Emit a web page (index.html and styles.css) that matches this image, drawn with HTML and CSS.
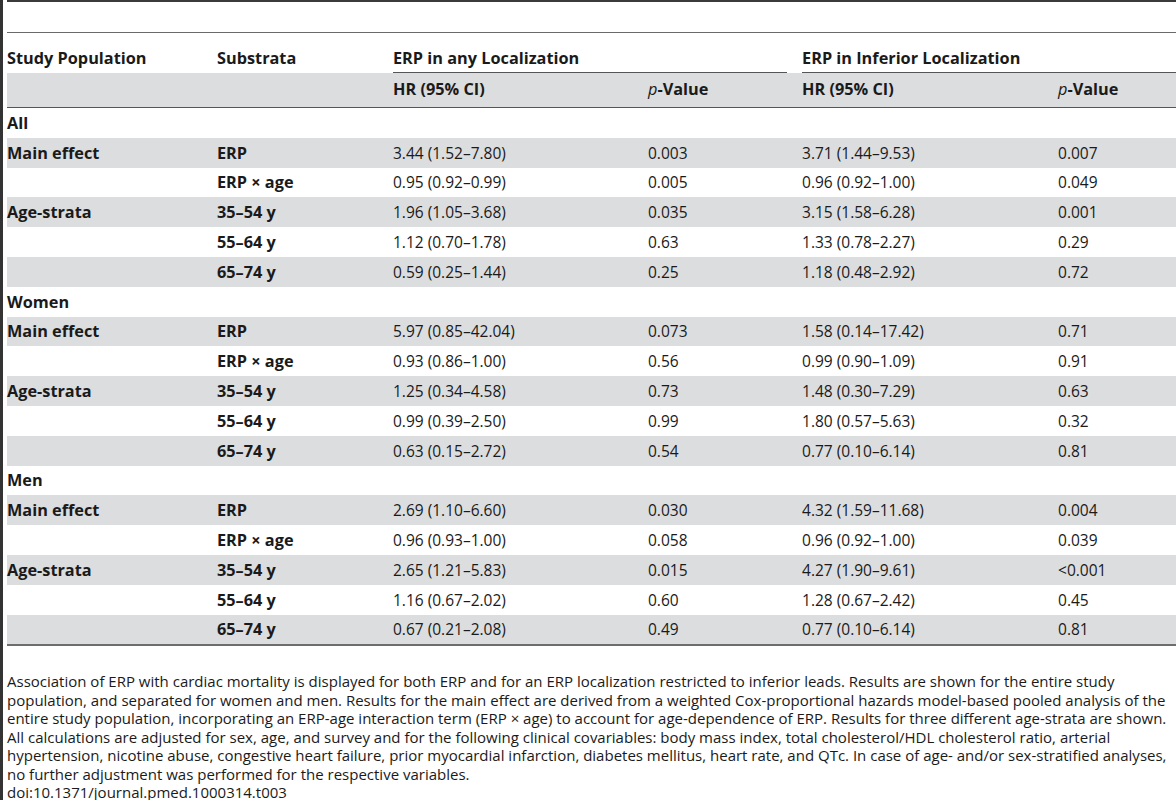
FILE: index.html
```html
<!DOCTYPE html>
<html lang="en">

<head>
    <meta charset="UTF-8">
    <meta name="viewport" content="width=device-width, initial-scale=1.0">
    <title>Table 3. ERP and cardiac mortality</title>
    <link rel="stylesheet" href="styles.css">
</head>

<body>
    <div class="page">
        <div class="figure">
            <div class="caption-space"></div>
            <table class="results">
                <colgroup>
                    <col class="c-pop">
                    <col class="c-sub">
                    <col class="c-hr">
                    <col class="c-p">
                    <col class="c-hr2">
                    <col class="c-p2">
                </colgroup>
                <thead>
                    <tr class="head-top">
                        <th>Study Population</th>
                        <th>Substrata</th>
                        <th colspan="2" class="group first">ERP in any Localization</th>
                        <th colspan="2" class="group">ERP in Inferior Localization</th>
                    </tr>
                    <tr class="head-sub">
                        <th></th>
                        <th></th>
                        <th>HR (95% CI)</th>
                        <th><em>p</em>-Value</th>
                        <th>HR (95% CI)</th>
                        <th><em>p</em>-Value</th>
                    </tr>
                </thead>
                <tbody>
                    <tr class="section"><td>All</td><td></td><td></td><td></td><td></td><td></td></tr>
                    <tr><td class="b">Main effect</td><td class="b">ERP</td><td>3.44 (1.52–7.80)</td><td>0.003</td><td>3.71 (1.44–9.53)</td><td>0.007</td></tr>
                    <tr><td></td><td class="b">ERP × age</td><td>0.95 (0.92–0.99)</td><td>0.005</td><td>0.96 (0.92–1.00)</td><td>0.049</td></tr>
                    <tr><td class="b">Age-strata</td><td class="b">35–54 y</td><td>1.96 (1.05–3.68)</td><td>0.035</td><td>3.15 (1.58–6.28)</td><td>0.001</td></tr>
                    <tr><td></td><td class="b">55–64 y</td><td>1.12 (0.70–1.78)</td><td>0.63</td><td>1.33 (0.78–2.27)</td><td>0.29</td></tr>
                    <tr><td></td><td class="b">65–74 y</td><td>0.59 (0.25–1.44)</td><td>0.25</td><td>1.18 (0.48–2.92)</td><td>0.72</td></tr>

                    <tr class="section"><td>Women</td><td></td><td></td><td></td><td></td><td></td></tr>
                    <tr><td class="b">Main effect</td><td class="b">ERP</td><td>5.97 (0.85–42.04)</td><td>0.073</td><td>1.58 (0.14–17.42)</td><td>0.71</td></tr>
                    <tr><td></td><td class="b">ERP × age</td><td>0.93 (0.86–1.00)</td><td>0.56</td><td>0.99 (0.90–1.09)</td><td>0.91</td></tr>
                    <tr><td class="b">Age-strata</td><td class="b">35–54 y</td><td>1.25 (0.34–4.58)</td><td>0.73</td><td>1.48 (0.30–7.29)</td><td>0.63</td></tr>
                    <tr><td></td><td class="b">55–64 y</td><td>0.99 (0.39–2.50)</td><td>0.99</td><td>1.80 (0.57–5.63)</td><td>0.32</td></tr>
                    <tr><td></td><td class="b">65–74 y</td><td>0.63 (0.15–2.72)</td><td>0.54</td><td>0.77 (0.10–6.14)</td><td>0.81</td></tr>

                    <tr class="section"><td>Men</td><td></td><td></td><td></td><td></td><td></td></tr>
                    <tr><td class="b">Main effect</td><td class="b">ERP</td><td>2.69 (1.10–6.60)</td><td>0.030</td><td>4.32 (1.59–11.68)</td><td>0.004</td></tr>
                    <tr><td></td><td class="b">ERP × age</td><td>0.96 (0.93–1.00)</td><td>0.058</td><td>0.96 (0.92–1.00)</td><td>0.039</td></tr>
                    <tr><td class="b">Age-strata</td><td class="b">35–54 y</td><td>2.65 (1.21–5.83)</td><td>0.015</td><td>4.27 (1.90–9.61)</td><td>&lt;0.001</td></tr>
                    <tr><td></td><td class="b">55–64 y</td><td>1.16 (0.67–2.02)</td><td>0.60</td><td>1.28 (0.67–2.42)</td><td>0.45</td></tr>
                    <tr><td></td><td class="b">65–74 y</td><td>0.67 (0.21–2.08)</td><td>0.49</td><td>0.77 (0.10–6.14)</td><td>0.81</td></tr>
                </tbody>
            </table>
            <div class="footnote">
                <p>Association of ERP with cardiac mortality is displayed for both ERP and for an ERP localization restricted to inferior leads. Results are shown for the entire study population, and separated for women and men. Results for the main effect are derived from a weighted Cox-proportional hazards model-based pooled analysis of the entire study population, incorporating an ERP-age interaction term (ERP × age) to account for age-dependence of ERP. Results for three different age-strata are shown. All calculations are adjusted for sex, age, and survey and for the following clinical covariables: body mass index, total cholesterol/HDL cholesterol ratio, arterial hypertension, nicotine abuse, congestive heart failure, prior myocardial infarction, diabetes mellitus, heart rate, and QTc. In case of age- and/or sex-stratified analyses, no further adjustment was performed for the respective variables.</p>
                <p>doi:10.1371/journal.pmed.1000314.t003</p>
            </div>
        </div>
    </div>
</body>

</html>
```

FILE: styles.css
```css
html,
body {
    margin: 0;
    background: #fff;
}

body {
    font-family: 'Open Sans', 'Noto Sans', sans-serif;
    color: #1a1a1a;
    width: 1176px;
    height: 800px;
    overflow: hidden;
}

.page {
    border-left: 3px solid #333;
    padding-left: 4px;
    height: 800px;
}

.figure {
    border-top: 2px solid #3b3b3b;
    width: 1180px;
}

.caption-space {
    height: 30px;
}

.results {
    width: 1169px;
    border-collapse: separate;
    border-spacing: 0;
    table-layout: fixed;
    font-size: 15.5px;
    border-top: 1px solid #6a6a6a;
    border-bottom: 2px solid #6d6d6d;
}

.c-pop { width: 210px; }
.c-sub { width: 176px; }
.c-hr { width: 255px; }
.c-p { width: 154px; }
.c-hr2 { width: 256px; }
.c-p2 { width: 118px; }

.results th,
.results td {
    text-align: left;
    padding: 0;
    white-space: nowrap;
}

.results th {
    font-weight: bold;
    font-size: 16.3px;
}

.head-top th {
    height: 40px;
    vertical-align: bottom;
    padding-bottom: 4px;
    box-sizing: border-box;
}

.head-top .group {
    background: linear-gradient(#555, #555) no-repeat left bottom / 100% 1px;
}

.head-top .group.first {
    background-size: calc(100% - 15px) 1px;
}

.head-sub th {
    height: 35px;
    background: #dcdddf;
    border-bottom: 1px solid #555;
    box-sizing: border-box;
    padding-bottom: 3px;
}

.results em {
    font-style: italic;
    font-weight: normal;
}

.results tbody tr {
    height: 29.8px;
}

.results tbody tr:nth-child(even) {
    background: #dcdddf;
}

.results td.b,
.section td {
    font-weight: bold;
    font-size: 16.3px;
}

.footnote {
    padding-top: 26px;
    font-size: 15px;
    line-height: 18.5px;
}

.footnote p {
    margin: 0;
}
```
